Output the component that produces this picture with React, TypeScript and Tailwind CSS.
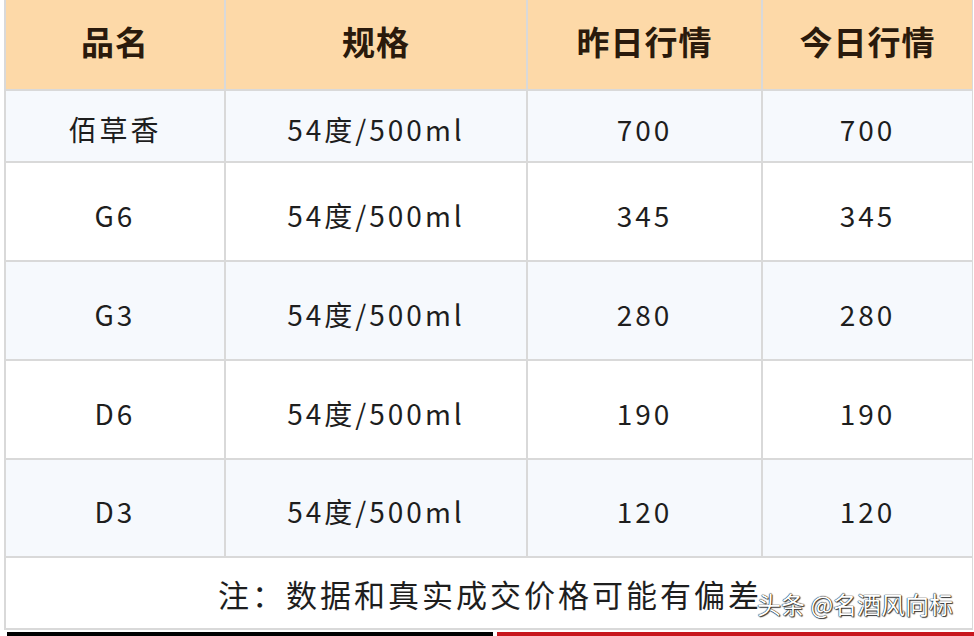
import React from "react";

const rows = [
  { name: "佰草香", spec: "54度/500ml", yesterday: "700", today: "700", h: "h-[70px]" },
  { name: "G6", spec: "54度/500ml", yesterday: "345", today: "345", h: "h-[97px]" },
  { name: "G3", spec: "54度/500ml", yesterday: "280", today: "280", h: "h-[97px]" },
  { name: "D6", spec: "54度/500ml", yesterday: "190", today: "190", h: "h-[97px]" },
  { name: "D3", spec: "54度/500ml", yesterday: "120", today: "120", h: "h-[96px]" },
];

const headers = ["品名", "规格", "昨日行情", "今日行情"];

const font = "font-['Noto_Sans_CJK_SC','Noto_Sans',sans-serif]";

const App = () => {
  return (
    <div className={`w-[974px] h-[636px] bg-white overflow-hidden flex flex-col ${font}`}>
      <div className="relative ml-[4px] w-[969px] bg-[#d9d9d9] pl-[2px] pr-[1px] pb-[2px] grid grid-cols-[218px_300px_233px_209px] gap-[2px]">
        {headers.map((h) => (
          <div
            key={h}
            className="h-[89px] bg-[#fdd9a8] flex items-center justify-center pb-[6px] text-[33px] font-bold text-[#2a1a0c] tracking-[1px]"
          >
            {h}
          </div>
        ))}

        {rows.map((r, i) => {
          const bg = i % 2 === 0 ? "bg-[#f6f9fd]" : "bg-white";
          return (
            <React.Fragment key={r.name}>
              {[r.name, r.spec, r.yesterday, r.today].map((v, j) => (
                <div
                  key={j}
                  className={`${r.h} ${bg} flex items-center justify-center pt-[6px] text-[28px] text-[#1e1e1e] tracking-[3px]`}
                >
                  {v}
                </div>
              ))}
            </React.Fragment>
          );
        })}

        <div className="col-span-4 h-[70px] bg-white flex items-center justify-center text-[31px] text-[#1e1e1e] tracking-[3px] pl-[2px] pt-[2px]">
          注：数据和真实成交价格可能有偏差
        </div>

        <span className="absolute left-[753px] top-[586px] text-[24px] text-white [text-shadow:0_0_1px_#000,0_0_1px_#000,1px_1px_1px_#444]">
          头条 @名酒风向标
        </span>
      </div>

      <div className="mt-[2px] h-[4px] flex">
        <div className="ml-[7px] w-[486px] bg-black" />
        <div className="ml-[4px] flex-1 bg-[#c8161d]" />
      </div>
    </div>
  );
};

export default App;
